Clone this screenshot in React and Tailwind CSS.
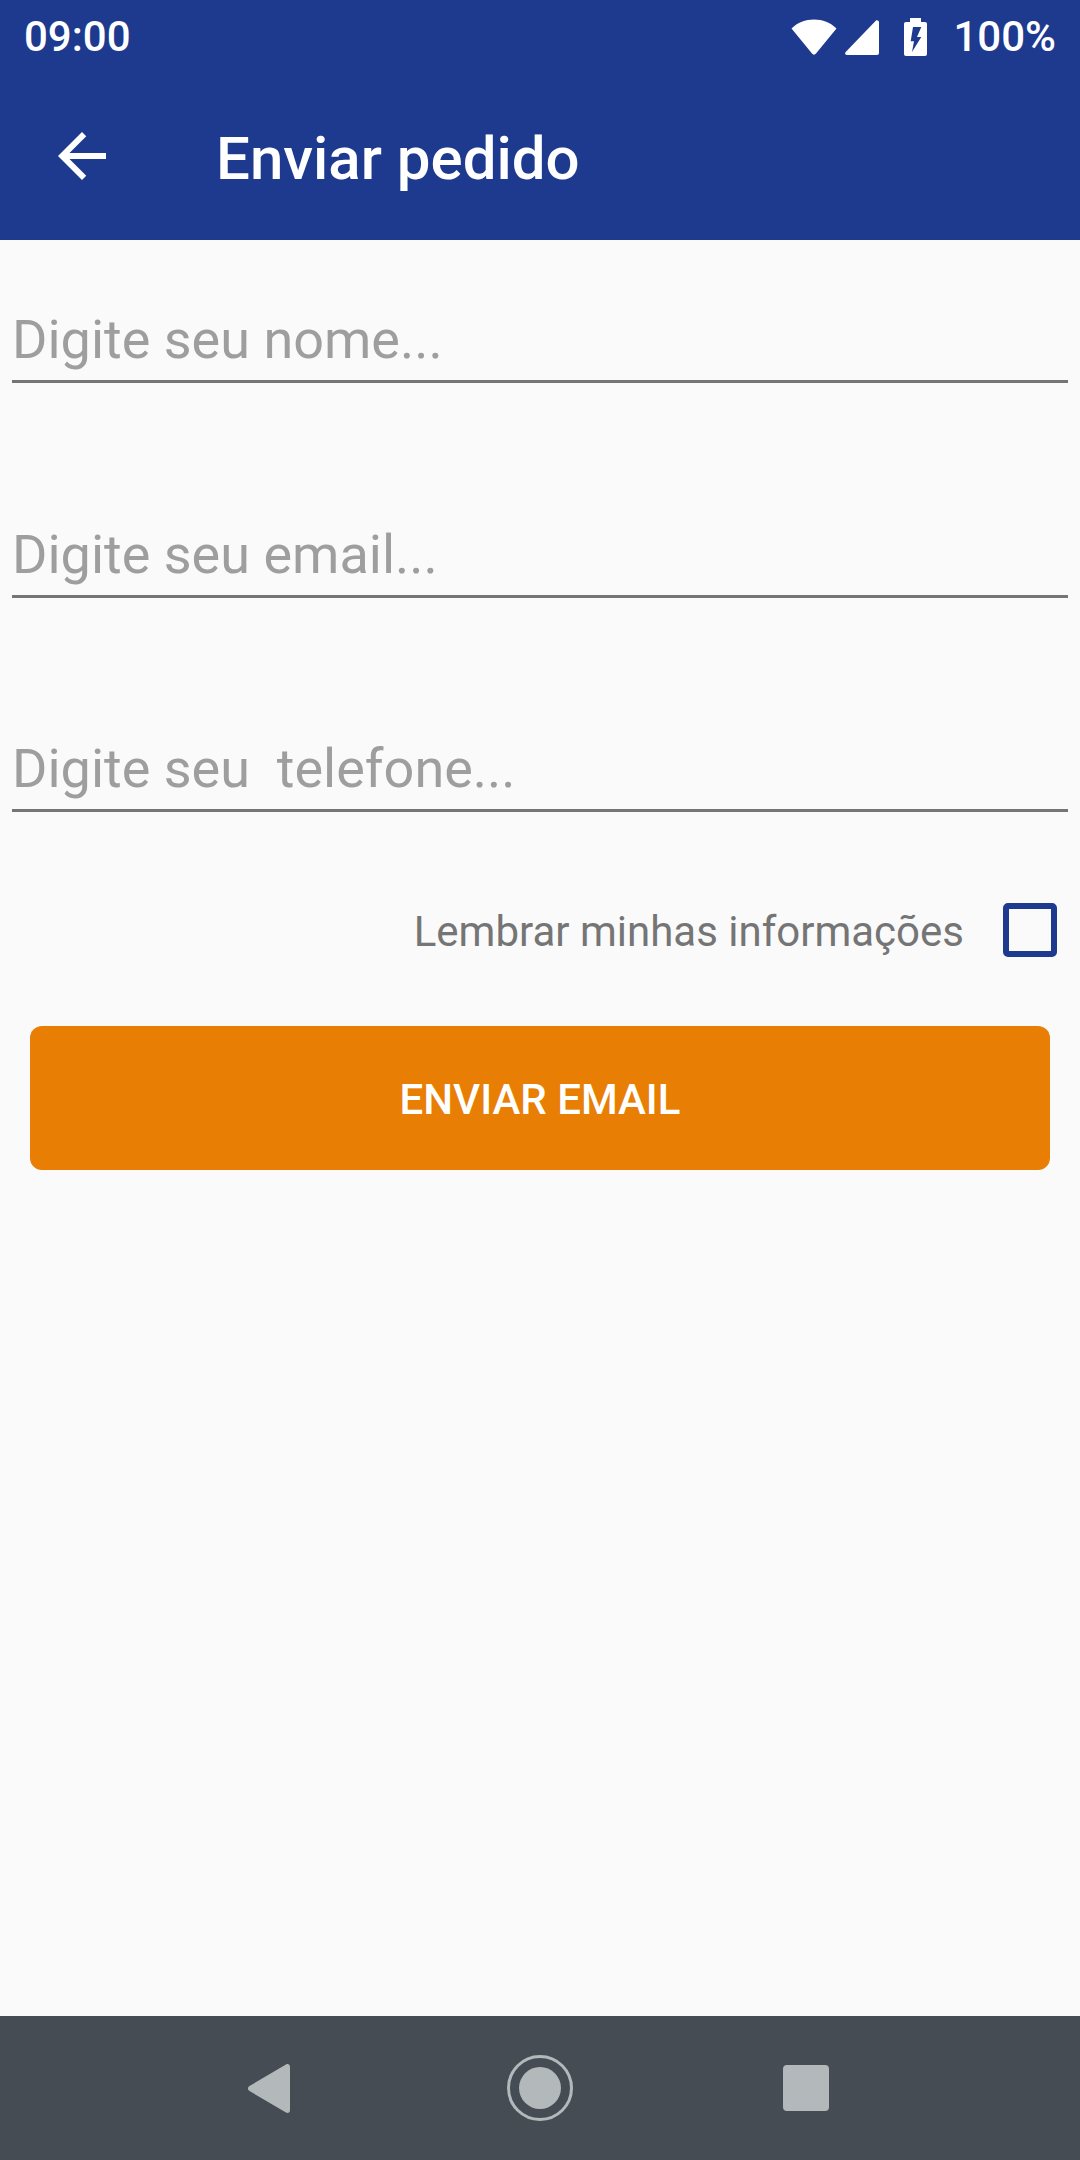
import React from "react";

const fields = ["Digite seu nome...", "Digite seu email...", "Digite seu\u00a0 telefone..."];

const WifiIcon = () => (
  <svg width="46" height="36" viewBox="0 0 46 36" fill="white">
    <path d="M0.5 9.5C6.5 3.5 14.5 0.5 23 0.5C31.5 0.5 39.5 3.5 45.5 9.5L25 34.5C24 36 22 36 21 34.5Z" />
  </svg>
);

const SignalIcon = () => (
  <svg width="34" height="35" viewBox="0 0 34 35" fill="white">
    <path d="M31 0.5C32.5 0 34 1 34 2.5V33C34 34.2 33.2 35 32 35H2C0.3 35 -0.5 33.3 0.7 32Z" />
  </svg>
);

const BatteryIcon = () => (
  <svg width="23" height="38" viewBox="0 0 23 38">
    <path
      fill="white"
      d="M6 0H17V4H21C22.2 4 23 4.8 23 6V36C23 37.2 22.2 38 21 38H2C0.8 38 0 37.2 0 36V6C0 4.8 0.8 4 2 4H6Z"
    />
    <path fill="#1e3a8f" d="M9 9H17.3L13 19H17.3L8 34L10 23.3H6.7Z" />
  </svg>
);

const BackArrow = () => (
  <svg width="72" height="72" viewBox="0 0 24 24" fill="white">
    <path d="M20 11H7.83l5.59-5.59L12 4l-8 8 8 8 1.41-1.41L7.83 13H20v-2z" />
  </svg>
);

export default function App() {
  return (
    <div className="w-[1080px] h-[2160px] flex flex-col bg-[#fafafa] font-['Roboto',sans-serif]">
      <div className="bg-[#1e3a8f] text-white">
        <div className="h-[72px] flex items-center pl-[24px] pr-[24px] pt-[2px] text-[42px] font-medium leading-none">
          <span className="flex-1">09:00</span>
          <div className="flex items-center">
            <WifiIcon />
            <div className="ml-[8px]">
              <SignalIcon />
            </div>
            <div className="ml-[25px]">
              <BatteryIcon />
            </div>
            <span className="ml-[26px]">100%</span>
          </div>
        </div>
        <div className="h-[168px] flex items-center pl-[46px]">
          <BackArrow />
          <h1 className="ml-[98px] pt-[5px] text-[60px] font-medium leading-none">Enviar pedido</h1>
        </div>
      </div>

      <main className="flex-1 flex flex-col pt-[65px]">
        <div className="flex flex-col gap-[137px] mx-[12px]">
          {fields.map((f, i) => (
            <div
              key={f}
              className={
                i === 2
                  ? "-mt-[1px] h-[78px] border-b-[3px] border-[#757575] pb-[5px] text-[54px] leading-[70px] text-[#9e9e9e] whitespace-pre"
                  : "h-[78px] border-b-[3px] border-[#757575] pb-[5px] text-[54px] leading-[70px] text-[#9e9e9e] whitespace-pre"
              }
            >
              {f}
            </div>
          ))}
        </div>

        <div className="mt-[91px] h-[54px] flex items-center justify-end pr-[23px]">
          <span className="pt-[3px] text-[42px] leading-[54px] text-[#757575]">Lembrar minhas informações</span>
          <div className="ml-[39px] w-[54px] h-[54px] border-[6px] border-[#1e3a8f] rounded-[5px]" />
        </div>

        <button
          type="button"
          className="mt-[69px] mx-[30px] h-[144px] pt-[2px] rounded-[12px] bg-[#e87e04] text-white text-[42px] font-medium"
        >
          ENVIAR EMAIL
        </button>
      </main>

      <nav className="h-[144px] bg-[#454c53] flex items-center pl-[248px]">
        <svg width="42" height="49" viewBox="0 0 42 49" fill="#b3b8ba">
          <path d="M38 0.5C40 -0.5 42 0.5 42 3V46C42 48.5 40 49.5 38 48.5L1.5 27C-0.5 25.8 -0.5 23.2 1.5 22Z" />
        </svg>
        <div className="ml-[217px] w-[66px] h-[66px] rounded-full border-[3px] border-[#b3b8ba] flex items-center justify-center">
          <div className="w-[42px] h-[42px] rounded-full bg-[#b3b8ba]" />
        </div>
        <div className="ml-[210px] w-[46px] h-[46px] rounded-[4px] bg-[#b3b8ba]" />
      </nav>
    </div>
  );
}
